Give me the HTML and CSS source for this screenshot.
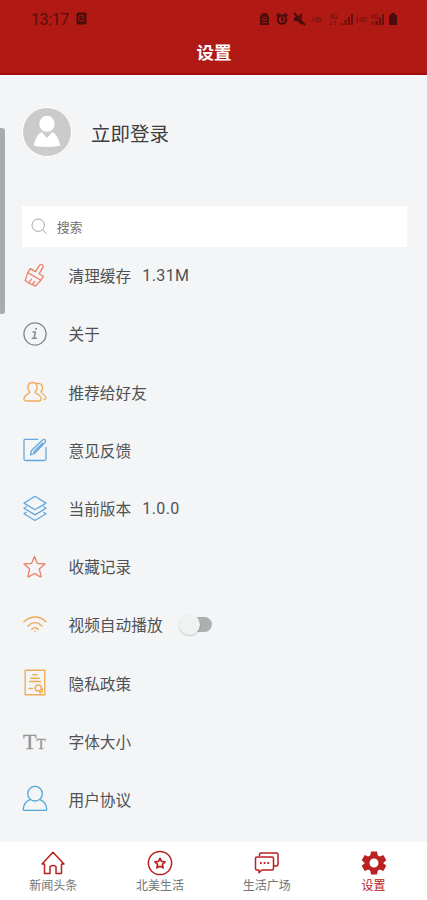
FILE: index.html
```html
<!DOCTYPE html>
<html lang="zh-CN">
<head>
<meta charset="utf-8">
<meta name="viewport" content="width=device-width, initial-scale=1">
<title>设置</title>
<link rel="stylesheet" href="styles.css">
</head>
<body>
<div class="app">
  <header class="header">
    <div class="status">
      <span class="time">13:17</span>
      <svg class="clock" width="11" height="13" viewBox="0 0 11 13"><rect x=".5" y=".5" width="10" height="12" rx="1.500" fill="currentColor"/><path d="M8 4.500A3 3 0 1 0 8.300 7M5.500 6.500 8 4.500" fill="none" stroke="#a21914" stroke-width="1.100"/></svg>
      <svg class="signals" width="142" height="16" viewBox="0 0 142 16" fill="currentColor">
        <path d="M1 7a4.500 5 0 0 1 9 0v7H1z"/><path d="M3.500 8a2 2 0 0 1 4 0v1h-4zM3 11.500h5" fill="none" stroke="#a21914"/>
        <circle cx="23" cy="8.500" r="4.200" fill="none" stroke="currentColor" stroke-width="2.200"/><path d="M23 6v3h2M17.500 5l3-2.500M28.500 5l-3-2.500" fill="none" stroke="currentColor" stroke-width="1.800"/>
        <path d="M35 6h3l5-4v12l-5-4h-3z"/><path d="m35 2 11 12" stroke="currentColor" stroke-width="2"/><path d="m37 2 10 11" stroke="#b11a14" stroke-width=".7"/>
        <g opacity=".7"><text x="53" y="11" font-size="7">HD</text><text x="70" y="7.500" font-size="7">4G</text><path d="M72 14v-4m-1 3 1 1 1-1M76 14v-4m-1 1 1-1 1 1" fill="none" stroke="currentColor" stroke-width=".8"/><path d="M82 14v-2h2v2zM85.500 14v-5h2v5zM89 14V6h2v8zM92 14V3h2v11z"/><text x="97" y="11" font-size="8">HD</text><text x="111" y="7.500" font-size="7">4G</text><path d="M113 14v-4M116 14v-4" stroke="currentColor"/><path d="M117 14v-4h2v4zM120 14V7h2v7zM123 14V3h2v11z"/></g>
        <path d="M130 4h2V2h4v2h2v10h-8z"/>
      </svg>
    </div>
    <h1 class="title">设置</h1>
  </header>

  <main class="content">
    <div class="scrollbar"></div>
    <section class="profile">
      <svg class="avatar" width="50" height="50" viewBox="0 0 50 50"><circle cx="25" cy="25" r="24.500" fill="#cbcbcb" stroke="#fff"/><ellipse cx="25" cy="16.800" rx="7.700" ry="8" fill="#fff"/><path d="M13.200 39c-1 0-1.400-.5-1.200-1.500 1-5 3.500-10.500 7.700-12.500l5.300 6 5.300-6c4.200 2 6.700 7.500 7.700 12.500.2 1-.2 1.500-1.200 1.500-8 1.300-15.600 1.300-23.600 0z" fill="#fff"/></svg>
      <span class="login">立即登录</span>
    </section>
    <div class="search">
      <svg width="17" height="17" viewBox="0 0 17 17" fill="none" stroke="#a5a5a5"><circle cx="7.200" cy="7.200" r="6.200"/><path d="m11.600 11.800 4 4"/></svg>
      <span>搜索</span>
    </div>
    <ul class="list">
      <li class="row">
        <svg class="icon coral" viewBox="0 0 24 26"><path d="m12.500 8.600 3.800-6c.8-1.300 1.600-1.600 2.800-.9 1.300.8 1.300 1.800.6 3l-3.500 6 4.200 2.500-2.500 4L4.700 9.600l2.500-4 5.300 3zM4.700 9.600l-2.500 7.900c3 2.500 6.500 4.500 10.300 5.500l5.400-5.800M6 19.300l2.500-3M9.500 21.300l2-2.800"/></svg>
        <span>清理缓存</span><span class="value">1.31M</span>
      </li>
      <li class="row">
        <svg class="icon slate" viewBox="0 0 24 26"><circle cx="12" cy="13" r="11.100"/><path d="M10 11h2.300l-1.100 6.200h2.300M9.300 17.200h2" stroke-width="1.500"/><circle cx="13" cy="7.800" r=".7" fill="currentColor" stroke-width=".6"/></svg>
        <span>关于</span>
      </li>
      <li class="row">
        <svg class="icon amber" viewBox="0 0 24 26"><path d="M7 13.200C3.700 10 4.200 3.500 9.500 3.500S15.200 10 12 13.200c0 1.500 5.800 1.800 6 6.300.1 2-.8 2.500-2 2.500H3c-1.300 0-2.200-.7-2-2.500.5-4.500 6-4.800 6-6.300zM14 4.500c5.300-.8 7.200 4.600 4 8.300-.5 1.700 4.200 2.200 4.800 5.500.2 1.400-.3 2.200-2 2.200"/></svg>
        <span>推荐给好友</span>
      </li>
      <li class="row">
        <svg class="icon blue" viewBox="0 0 24 26"><path d="M15 2.300H2.200Q1 2.300 1 3.500v18.500Q1 23.500 2.500 23.500h19q1.500 0 1.500-1.500V10.500M7.500 17.800l1-4.300L19.800 2.800q1.200-1 2.300.1t0 2.300L11.500 16.500zM10.500 15l9-8.700"/></svg>
        <span>意见反馈</span>
      </li>
      <li class="row">
        <svg class="icon blue" viewBox="0 0 24 26"><path d="M12 .3 23 7.100 12 13.800 1 7.100zM3.200 10.700 1 12.200l11 6.700 11-6.700-2.200-1.500M3.200 16.300 1 17.800 12 24.500l11-6.700-2.200-1.500"/></svg>
        <span>当前版本</span><span class="value">1.0.0</span>
      </li>
      <li class="row">
        <svg class="icon coral" viewBox="0 0 24 26"><path d="m11.500 2.500 2.800 6.800 7.700.7-5.700 5 1.900 7.300q-.2.800-1.200.3l-5.500-3.100-5.500 3.100q-1 .5-1.200-.3L6.700 15 1 10l7.700-.7z"/></svg>
        <span>收藏记录</span>
      </li>
      <li class="row">
        <svg class="icon amber" viewBox="0 0 24 26"><path d="M1 9.800c6.500-6.400 15.500-6.400 22 0M5 14c4.300-4.200 9.700-4.200 14 0M8.800 17.300c2-2 4.400-2 6.400 0" stroke-width="1.500"/><circle cx="12" cy="19.300" r=".8" fill="currentColor" stroke="none"/></svg>
        <span>视频自动播放</span><span class="toggle"></span>
      </li>
      <li class="row">
        <svg class="icon amber" viewBox="0 0 24 26"><path d="M2.200.3h19.600v24.400H2.200zM10 4.700h4M7.500 8.200h9M6.500 11.500h11M6 18.500h3.500" stroke-width="1.400"/><circle cx="15.300" cy="18" r="3.100" stroke-width="1.500"/><path d="M17 20.700v2.300l2.300-1v-3.500"/></svg>
        <span>隐私政策</span>
      </li>
      <li class="row">
        <svg class="icon gray" viewBox="0 0 24 26"><text x="0" y="20.500" font-size="22">T</text><text x="13.400" y="20.500" font-size="15">T</text></svg>
        <span>字体大小</span>
      </li>
      <li class="row">
        <svg class="icon sky" viewBox="0 0 24 26"><circle cx="12" cy="7.700" r="7.300"/><path d="M7.200 13.700C3.300 15.100.6 18.800.3 23q-.1 1.300 1.200 1.300h21q1.300 0 1.200-1.300c-.3-4.200-3-7.900-6.900-9.300"/></svg>
        <span>用户协议</span>
      </li>
    </ul>
  </main>

  <nav class="tabs">
    <a class="tab">
      <svg viewBox="0 0 26 26"><path d="M4.500 14H2L13 2.200 24 14h-2.500v9.500H16v-7q-3-2.200-6 0v7H4.500z"/></svg>
      <span>新闻头条</span>
    </a>
    <a class="tab">
      <svg viewBox="0 0 26 26"><circle cx="13" cy="13" r="11.600"/><path d="m13 8.300 1.500 3.100 3.500.5-2.500 2.400.6 3.500-3.100-1.600-3.100 1.600.6-3.500L8 11.900l3.500-.5z" stroke-width="1.700"/></svg>
      <span>北美生活</span>
    </a>
    <a class="tab">
      <svg viewBox="0 0 26 26"><path d="M3 7h15q1.500 0 1.500 1.500v10Q19.500 20 18 20H8l-3 2.800V20H3q-1.500 0-1.500-1.500v-10Q1.500 7 3 7zM5.500 6V4.500Q5.500 3 7 3h15.500Q24 3 24 4.500v10q0 1.500-1.500 1.500H20"/><path d="M6 13h1.700m2 0h1.700m2 0h1.700" stroke-width="2"/></svg>
      <span>生活广场</span>
    </a>
    <a class="tab active">
      <svg viewBox="0 0 26 26"><g fill="currentColor" stroke="none"><path fill-rule="evenodd" d="M10 1.500h6l.7 3.700 2.100 1.200 3.500-1.300 3 5.200-2.900 2.400v.6l2.900 2.400-3 5.200-3.500-1.300-2.100 1.200-.7 3.700h-6l-.7-3.700-2.100-1.200-3.500 1.300-3-5.200 2.900-2.400v-.6L.7 10.300l3-5.200 3.500 1.300 2.100-1.200zM13 8.500a4.500 4.500 0 1 0 0 9 4.500 4.500 0 0 0 0-9z"/></g></svg>
      <span>设置</span>
    </a>
  </nav>
</div>
</body>
</html>
```
FILE: styles.css
```css
* { box-sizing: border-box; }

body {
  margin: 0;
  font-family: Roboto, "Noto Sans CJK SC", sans-serif;
  color: #505254;
}

.app {
  height: 900px;
  display: flex;
  flex-direction: column;
  overflow: hidden;
  background: #f3f5f7;
}

.header {
  height: 75px;
  flex: none;
  background: #b11a14;
  border-bottom: 2px solid #a50b0c;
}

.status {
  height: 36px;
  padding: 2px 26px 0 31px;
  display: flex;
  align-items: center;
  color: #4a0d0b;
}

.time { font-size: 16px; letter-spacing: -.4px; opacity: .85; }
.clock { margin-left: 7px; margin-top: -1px; }
.signals { margin-left: auto; margin-top: -1px; font-family: Roboto, sans-serif; }

.title {
  margin: 0;
  height: 34px;
  line-height: 34px;
  padding-left: 1px;
  text-align: center;
  font-size: 17.500px;
  font-weight: 700;
  color: #fff;
}

.content {
  position: relative;
  flex: 1;
  min-height: 0;
  padding: 32px 20px 0 22px;
}

.scrollbar {
  position: absolute;
  left: 0;
  top: 53px;
  width: 5px;
  height: 186px;
  border-radius: 0 3px 3px 0;
  background: #a9abac;
}

.profile {
  height: 50px;
  display: flex;
  align-items: center;
  gap: 19px;
}

.login { font-size: 19.500px; color: #3c3e40; }

.search {
  height: 41px;
  margin-top: 49px;
  padding: 0 0 1px 9px;
  display: flex;
  align-items: center;
  gap: 9px;
  background: #fff;
  font-size: 12.700px;
  color: #707070;
}

.list { margin: -.3px 0 0; padding: 0; list-style: none; }

.row {
  height: 58.200px;
  display: flex;
  align-items: center;
  font-size: 15.700px;
}

.icon {
  width: 24px;
  height: 26px;
  margin: 0 22px 0 .5px;
  fill: none;
  stroke: currentColor;
  stroke-width: 1.300;
  stroke-linejoin: round;
  stroke-linecap: round;
  overflow: visible;
}

.icon text {
  font-family: "Liberation Serif", serif;
  fill: currentColor;
  stroke-width: .3;
}

.coral { color: #ed8068; }
.slate { color: #858995; }
.amber { color: #efad59; }
.blue { color: #65a7df; }
.gray { color: #949698; }
.sky { color: #51a7dc; }

.value { margin-left: 11px; font-size: 16px; letter-spacing: .4px; }

.toggle {
  position: relative;
  width: 32px;
  height: 15px;
  margin-left: 17px;
  border-radius: 8px;
  background: #adafb0;
}

.toggle::before {
  content: "";
  position: absolute;
  left: -1px;
  top: -3px;
  width: 21px;
  height: 21px;
  border-radius: 50%;
  background: #f0f1f1;
  box-shadow: 0 1px 2px #0003;
}

.tabs {
  height: 58px;
  flex: none;
  display: grid;
  grid-template-columns: repeat(4, 1fr);
  background: #fff;
}

.tab {
  display: flex;
  flex-direction: column;
  align-items: center;
  padding-top: 8px;
  font-size: 12px;
  line-height: 18px;
  color: #747474;
}

.tab span { padding-top: 1px; }

.tab svg {
  width: 26px;
  height: 26px;
  fill: none;
  stroke: #b9201e;
  stroke-width: 1.500;
  stroke-linejoin: round;
}

.tab.active { color: #b92222; }
```
